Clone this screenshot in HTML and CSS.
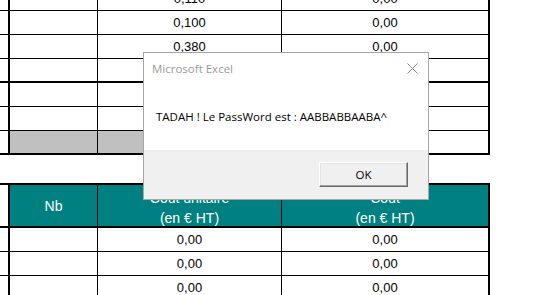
FILE: index.html
```html
<!DOCTYPE html>
<html lang="fr">
<head>
    <meta charset="UTF-8">
    <meta name="viewport" content="width=device-width, initial-scale=1.0">
    <title>Microsoft Excel</title>
    <link rel="stylesheet" href="styles.css">
</head>
<body>
    <div class="sheet">
        <!-- bloc du haut -->
        <div class="row">
            <div class="cell a"></div><div class="cell b"></div>
            <div class="cell c">0,110</div><div class="cell d">0,00</div>
        </div>
        <div class="row">
            <div class="cell a"></div><div class="cell b"></div>
            <div class="cell c">0,100</div><div class="cell d">0,00</div>
        </div>
        <div class="row">
            <div class="cell a"></div><div class="cell b"></div>
            <div class="cell c">0,380</div><div class="cell d">0,00</div>
        </div>
        <div class="row thick">
            <div class="cell a"></div><div class="cell b"></div>
            <div class="cell c"></div><div class="cell d"></div>
        </div>
        <div class="row">
            <div class="cell a"></div><div class="cell b"></div>
            <div class="cell c"></div><div class="cell d"></div>
        </div>
        <div class="row">
            <div class="cell a"></div><div class="cell b"></div>
            <div class="cell c"></div><div class="cell d"></div>
        </div>
        <div class="row thick">
            <div class="cell a"></div><div class="cell b grey"></div>
            <div class="cell c grey"></div><div class="cell d"></div>
        </div>

        <div class="gap"></div>

        <!-- bloc du bas -->
        <div class="row head">
            <div class="cell a"></div>
            <div class="cell b">Nb</div>
            <div class="cell c wrap">Coût unitaire<br>(en € HT)</div>
            <div class="cell d wrap">Coût<br>(en € HT)</div>
        </div>
        <div class="row">
            <div class="cell a"></div><div class="cell b"></div>
            <div class="cell c">0,00</div><div class="cell d">0,00</div>
        </div>
        <div class="row">
            <div class="cell a"></div><div class="cell b"></div>
            <div class="cell c">0,00</div><div class="cell d">0,00</div>
        </div>
        <div class="row">
            <div class="cell a"></div><div class="cell b"></div>
            <div class="cell c">0,00</div><div class="cell d">0,00</div>
        </div>
    </div>

    <div class="msgbox">
        <div class="msg-title">
            <span>Microsoft Excel</span>
            <svg class="close" width="11" height="11" viewBox="0 0 11 11">
                <path d="M0.5 0.5 L10.5 10.5 M10.5 0.5 L0.5 10.5" stroke="#8a8a8a" stroke-width="1" fill="none"/>
            </svg>
        </div>
        <div class="msg-body">TADAH ! Le PassWord est : AABBABBAABA^</div>
        <div class="msg-footer">
            <button class="ok">OK</button>
        </div>
    </div>
</body>
</html>
```

FILE: styles.css
```css
body {
    margin: 0;
    background: #fff;
    font-family: "Liberation Sans", Arial, sans-serif;
    overflow: hidden;
}
.sheet {
    margin-top: -13px;
    width: 490px;
}
.row {
    display: flex;
    height: 24px;
}
.cell {
    box-sizing: border-box;
    height: 100%;
    border-right: 1px solid #000;
    border-bottom: 1px solid #000;
    display: flex;
    align-items: center;
    justify-content: center;
    font-size: 13px;
    color: #000;
}
.a {
    width: 10px;
    border-right-width: 2px;
}
.b {
    width: 88px;
}
.c {
    width: 184px;
}
.d {
    width: 208px;
    border-right-width: 2px;
}
.row.thick .cell {
    border-bottom-width: 2px;
}
.grey {
    background: #c0c0c0;
}
.gap {
    height: 28px;
}
.row.head {
    height: 45px;
}
.row.head .cell {
    border-top: 2px solid #000;
    border-bottom-width: 2px;
    background: #008080;
    color: #fff;
    font-size: 14px;
    line-height: 20px;
    text-align: center;
}
.row.head .cell.wrap {
    padding-top: 5px;
}
.row.head .cell.a {
    background: #fff;
}

/* boite de dialogue */
.msgbox {
    position: absolute;
    left: 143px;
    top: 52px;
    width: 286px;
    height: 148px;
    box-sizing: border-box;
    border: 1px solid #a6a6a6;
    background: #fff;
    display: flex;
    flex-direction: column;
    font-family: "Open Sans", sans-serif;
    font-size: 11.5px;
}
.msg-title {
    height: 30px;
    display: flex;
    align-items: center;
    justify-content: space-between;
    padding: 0 10px 0 8px;
    color: #9a9a9a;
}
.close {
    margin-top: 1px;
}
.msg-body {
    flex: 1;
    padding: 26px 0 0 12px;
    color: #000;
}
.msg-footer {
    height: 49px;
    background: #f0f0f0;
    display: flex;
    justify-content: flex-end;
    padding: 12px 20px 0 0;
    box-sizing: border-box;
}
.ok {
    width: 89px;
    height: 25px;
    background: #f0f0f0;
    border-top: 1px solid #fff;
    border-left: 1px solid #fff;
    border-right: 1px solid #696969;
    border-bottom: 1px solid #696969;
    box-shadow: inset -1px -1px 0 #a0a0a0, inset 1px 1px 0 #e3e3e3;
    font-family: "Open Sans", sans-serif;
    font-size: 11.5px;
    color: #000;
    padding: 0;
}
```
